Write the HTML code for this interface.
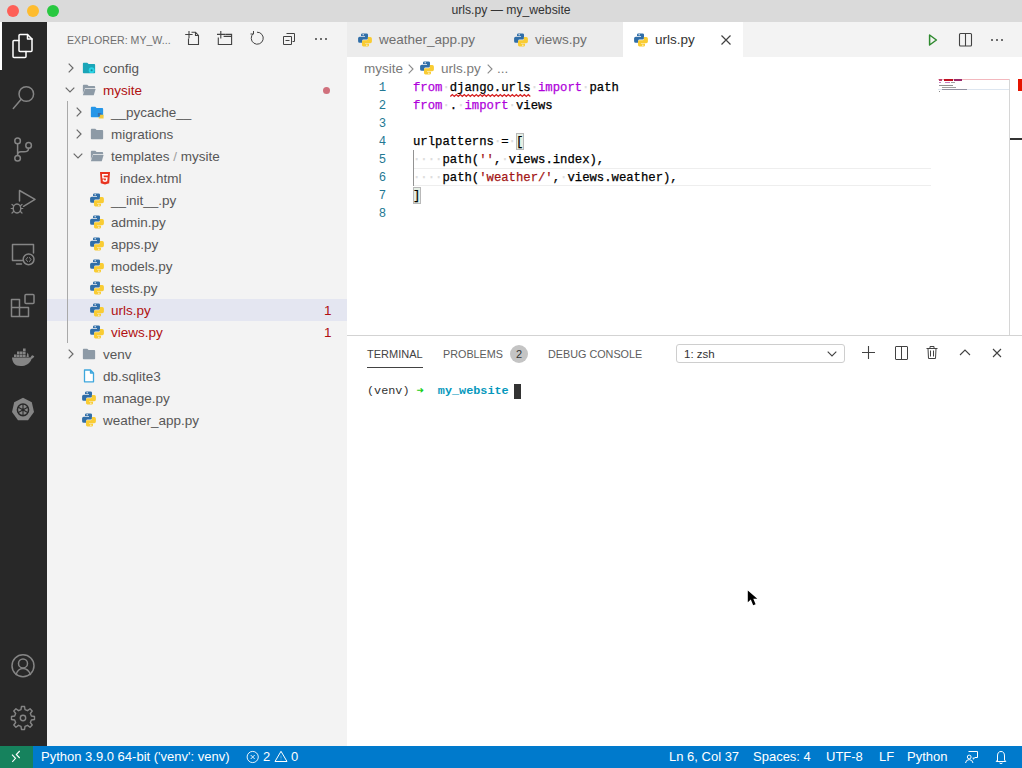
<!DOCTYPE html>
<html><head><meta charset="utf-8">
<style>
*{box-sizing:border-box;margin:0;padding:0}
html,body{width:1022px;height:768px;overflow:hidden;background:#fff;font-family:"Liberation Sans",sans-serif;position:relative}
.a{position:absolute}
svg{position:absolute;overflow:visible}
#title{left:0;top:0;width:1022px;height:22px;background:#dadada;}
.tl{position:absolute;top:5px;width:12px;height:12px;border-radius:50%}
#act{left:0;top:22px;width:47px;height:724px;background:#282828}
#side{left:47px;top:22px;width:300px;height:724px;background:#f3f3f3;color:#616161}
.t{position:absolute;white-space:pre;line-height:1}
.row{font-size:13.5px;color:#575757;margin-top:1px}
.err{color:#b01011}
.code{font-family:"Liberation Mono",monospace;font-size:12.25px;white-space:pre;position:absolute;line-height:18px;color:#000;margin-top:1px;-webkit-text-stroke:0.25px}
.kw{color:#af00db}
.str{color:#a31515}
.ln{font-family:"Liberation Mono",monospace;font-size:12.25px;position:absolute;line-height:18px;color:#237893;width:30px;text-align:right;margin-top:1px}
#status{left:0;top:746px;width:1022px;height:22px;background:#007acc;color:#fff}
.ws{color:#dcdcdc}
.st{font-size:12.6px;color:#fff}
</style></head>
<body>
<svg width="0" height="0" style="position:absolute">
<defs>
<symbol id="py" viewBox="0 0 14.4 14">
<path id="pyb" fill="#306ea8" d="M4.5 0.2H8.8Q10.3 0.2 10.3 1.7V5.2Q10.3 6.6 8.9 6.6H5.7Q4.3 6.6 4.3 8V9.9H1.7Q0.1 9.9 0.1 8.2V5.3Q0.1 3.6 1.8 3.6H7.2V3H3.1V1.6Q3.1 0.2 4.5 0.2Z"/>
<circle cx="5.3" cy="1.6" r="0.65" fill="#fff"/>
<g transform="rotate(180 7.2 6.95)"><path fill="#f9cc33" d="M4.5 0.2H8.8Q10.3 0.2 10.3 1.7V5.2Q10.3 6.6 8.9 6.6H5.7Q4.3 6.6 4.3 8V9.9H1.7Q0.1 9.9 0.1 8.2V5.3Q0.1 3.6 1.8 3.6H7.2V3H3.1V1.6Q3.1 0.2 4.5 0.2Z"/>
<circle cx="5.3" cy="1.6" r="0.65" fill="#fff"/></g>
</symbol>
<symbol id="fold" viewBox="0 0 16 16">
<path fill="#8d9aa6" d="M1 3.2C1 2.5 1.5 2 2.2 2H6L7.5 3.5H13.8C14.5 3.5 15 4 15 4.7V12.8C15 13.5 14.5 14 13.8 14H2.2C1.5 14 1 13.5 1 12.8Z"/>
</symbol>
<symbol id="foldopen" viewBox="0 0 16 16">
<path fill="#8d9aa6" d="M1 3.2C1 2.5 1.5 2 2.2 2H6L7.5 3.5H13.8C14.5 3.5 15 4 15 4.7V6H3.5L1 12Z"/>
<path fill="#8d9aa6" d="M3.3 6.8H15.6L13.4 14H1Z"/>
</symbol>
</defs>
</svg>

<!-- TITLE BAR -->
<div id="title" class="a">
  <div class="tl" style="left:7px;background:#fe5f57"></div>
  <div class="tl" style="left:27px;background:#febc2e"></div>
  <div class="tl" style="left:47px;background:#28c840"></div>
  <div class="t" style="left:0;width:1022px;top:4px;text-align:center;font-size:12.2px;color:#333">urls.py — my_website</div>
</div>

<!-- ACTIVITY BAR -->
<div id="act" class="a">
  <div class="a" style="left:0;top:0;width:2px;height:48px;background:#fff"></div>
</div>
<!-- activity icons -->
<svg style="left:0;top:0" width="47" height="768" fill="none" stroke="#858585" stroke-width="1.5" stroke-linejoin="round" stroke-linecap="round">
 <g stroke="#fff">
  <path d="M20 34.5H27.5L32 39V50.5Q32 51.5 31 51.5H20Q19 51.5 19 50.5V35.5Q19 34.5 20 34.5Z"/>
  <path d="M27.5 34.5V39H32"/>
  <path d="M19 40.5H14Q13 40.5 13 41.5V56.5Q13 57.5 14 57.5H25Q26 57.5 26 56.5V51.5"/>
 </g>
 <circle cx="26.3" cy="94" r="7.3"/>
 <path d="M21.2 99.2L13.3 108.4"/>
 <circle cx="17.6" cy="140.9" r="2.8"/>
 <circle cx="17.6" cy="158.3" r="2.8"/>
 <circle cx="28.6" cy="145.4" r="2.8"/>
 <path d="M17.6 143.7V155.5M28.6 148.2Q28.6 151.8 24 151.8H21Q17.6 151.8 17.6 155"/>
 <path d="M19.5 190.5L35 199.3L23.5 206.3M19.5 190.5V201"/>
 <ellipse cx="17" cy="208.5" rx="3.8" ry="4.4"/>
 <path d="M12 204.5L13.6 205.8M22 204.5L20.4 205.8M11.2 208.5H13.2M22.8 208.5H20.8M12 213L13.6 211.5M22 213L20.4 211.5" stroke-width="1.2"/>
 <path d="M22.5 260.5H12.5V244.5H33.5V253" />
 <path d="M16.5 264H21.5"/>
 <circle cx="28.6" cy="259.3" r="5.4"/>
 <path d="M27.5 257.5L26 259.5L27.5 261.5M29.5 257.5L31 259.5L29.5 261.5" stroke-width="1"/>
 <path d="M11.5 299.5H19.5V307.5H28.5V316.5H11.5ZM11.5 307.5H19.5V316.5"/>
 <rect x="25" y="294.5" width="9" height="9" rx="1"/>
 <circle cx="23" cy="665.8" r="11"/>
 <circle cx="23" cy="663.4" r="4.5"/>
 <path d="M16 674.5Q18 668.5 23 668.5Q28 668.5 30.5 674.5"/>
 <path d="M21.46 706.50 L24.54 706.50 L25.01 709.64 L27.49 710.67 L30.04 708.78 L32.22 710.96 L30.33 713.51 L31.36 715.99 L34.50 716.46 L34.50 719.54 L31.36 720.01 L30.33 722.49 L32.22 725.04 L30.04 727.22 L27.49 725.33 L25.01 726.36 L24.54 729.50 L21.46 729.50 L20.99 726.36 L18.51 725.33 L15.96 727.22 L13.78 725.04 L15.67 722.49 L14.64 720.01 L11.50 719.54 L11.50 716.46 L14.64 715.99 L15.67 713.51 L13.78 710.96 L15.96 708.78 L18.51 710.67 L20.99 709.64Z" stroke-width="1.4"/>
 <circle cx="23" cy="718" r="2.7" stroke-width="1.4"/>
</svg>
<svg style="left:11px;top:346px" width="24" height="24" viewBox="0 0 24 24">
  <path fill="#858585" d="M1 11.5H19.5C20 10.3 20.6 9.6 21.5 9.3L23.3 10.3C22.7 11.6 21.6 12.6 20.5 12.9 19 17.5 15 20 9.5 20 4 20 1.3 16.5 1 11.5Z"/>
  <path fill="#858585" d="M3 8.5H5.6V11H3ZM6 8.5H8.6V11H6ZM9 8.5H11.6V11H9ZM12 8.5H14.6V11H12ZM6 5.5H8.6V8.1H6ZM9 5.5H11.6V8.1H9ZM12 5.5H14.6V8.1H12ZM12 2.5H14.6V5.1H12ZM16.5 6.5Q17.8 7.5 17.8 11H15.5Z"/>
</svg>
<svg style="left:11px;top:397px" width="24" height="25" viewBox="0 0 24 24" preserveAspectRatio="none">
  <path fill="#858585" d="M12 0.8L20.8 5L23 14.5L17 22.2H7L1 14.5L3.2 5Z"/>
  <circle cx="12" cy="12.3" r="5.6" fill="none" stroke="#282828" stroke-width="1.5"/>
  <path d="M12 6.7V17.9M6.9 9.5L17.1 15.1M6.9 15.1L17.1 9.5" stroke="#282828" stroke-width="1.1"/>
  <circle cx="12" cy="12.3" r="1.3" fill="#282828"/>
</svg>
<!-- SIDEBAR -->
<div id="side" class="a"></div>
<div class="t" style="left:67px;top:35px;font-size:10.6px;color:#6f6f6f">EXPLORER: MY_W...</div>

<!-- SIDEBAR ROWS -->
<div class="a" style="left:47px;top:299px;width:300px;height:22px;background:#e4e6f1"></div>
<div class="a" style="left:67px;top:101px;width:1px;height:242px;background:#a9a9a9"></div>
<svg style="left:68px;top:63px" width="6" height="10" viewBox="0 0 6 10"><path d="M0.7 0.7L5 5L0.7 9.3" fill="none" stroke="#6a6a6a" stroke-width="1.2"/></svg>
<svg style="left:82px;top:61px" width="14" height="14" viewBox="0 0 16 16"><path fill="#1aa5b8" d="M1 3.2C1 2.5 1.5 2 2.2 2H6L7.5 3.5H13.8C14.5 3.5 15 4 15 4.7V12.8C15 13.5 14.5 14 13.8 14H2.2C1.5 14 1 13.5 1 12.8Z"/><circle cx="11" cy="10.5" r="3.3" fill="#2ad4e6"/><circle cx="11" cy="10.5" r="1.2" fill="#1a8a99"/></svg>
<div class="t row" style="left:103px;top:57px;line-height:22px">config</div>
<svg style="left:65px;top:87px" width="10" height="6" viewBox="0 0 10 6"><path d="M0.7 0.7L5 5L9.3 0.7" fill="none" stroke="#6a6a6a" stroke-width="1.2"/></svg>
<svg style="left:82px;top:83px" width="14" height="14"><use href="#foldopen"/></svg>
<div class="t row err" style="left:103px;top:79px;line-height:22px">mysite</div>
<svg style="left:76px;top:107px" width="6" height="10" viewBox="0 0 6 10"><path d="M0.7 0.7L5 5L0.7 9.3" fill="none" stroke="#6a6a6a" stroke-width="1.2"/></svg>
<svg style="left:90px;top:105px" width="14" height="14" viewBox="0 0 16 16"><path fill="#2596e8" d="M1 3.2C1 2.5 1.5 2 2.2 2H6L7.5 3.5H13.8C14.5 3.5 15 4 15 4.7V12.8C15 13.5 14.5 14 13.8 14H2.2C1.5 14 1 13.5 1 12.8Z"/><path fill="#3a6fa8" d="M9 9H13V11H11V13H9Z"/><path fill="#f3c93b" d="M11.5 11H15.5V15.5H10V13.5H11.5Z"/></svg>
<div class="t row" style="left:111px;top:101px;line-height:22px">__pycache__</div>
<svg style="left:76px;top:129px" width="6" height="10" viewBox="0 0 6 10"><path d="M0.7 0.7L5 5L0.7 9.3" fill="none" stroke="#6a6a6a" stroke-width="1.2"/></svg>
<svg style="left:90px;top:127px" width="14" height="14"><use href="#fold"/></svg>
<div class="t row" style="left:111px;top:123px;line-height:22px">migrations</div>
<svg style="left:73px;top:153px" width="10" height="6" viewBox="0 0 10 6"><path d="M0.7 0.7L5 5L9.3 0.7" fill="none" stroke="#6a6a6a" stroke-width="1.2"/></svg>
<svg style="left:90px;top:149px" width="14" height="14"><use href="#foldopen"/></svg>
<div class="t row" style="left:111px;top:145px;line-height:22px">templates <span style="color:#a0a0a0">/</span> mysite</div>
<svg style="left:98px;top:171px" width="14" height="14" viewBox="0 0 14 14"><path fill="#e8341f" d="M2 1H12L11.2 12.2L7 13.6L2.8 12.2Z"/><path fill="#fff" d="M4 3H10L9.8 4.5H5.6L5.75 6.2H9.65L9.2 10.3L7 11L4.8 10.3L4.65 8.5H6.1L6.2 9.3L7 9.6L7.8 9.3L7.95 7.6H4.3Z"/></svg>
<div class="t row" style="left:120px;top:167px;line-height:22px">index.html</div>
<svg style="left:90px;top:193px" width="14" height="14"><use href="#py"/></svg>
<div class="t row" style="left:111px;top:189px;line-height:22px">__init__.py</div>
<svg style="left:90px;top:215px" width="14" height="14"><use href="#py"/></svg>
<div class="t row" style="left:111px;top:211px;line-height:22px">admin.py</div>
<svg style="left:90px;top:237px" width="14" height="14"><use href="#py"/></svg>
<div class="t row" style="left:111px;top:233px;line-height:22px">apps.py</div>
<svg style="left:90px;top:259px" width="14" height="14"><use href="#py"/></svg>
<div class="t row" style="left:111px;top:255px;line-height:22px">models.py</div>
<svg style="left:90px;top:281px" width="14" height="14"><use href="#py"/></svg>
<div class="t row" style="left:111px;top:277px;line-height:22px">tests.py</div>
<svg style="left:90px;top:303px" width="14" height="14"><use href="#py"/></svg>
<div class="t row err" style="left:111px;top:299px;line-height:22px">urls.py</div>
<svg style="left:90px;top:325px" width="14" height="14"><use href="#py"/></svg>
<div class="t row err" style="left:111px;top:321px;line-height:22px">views.py</div>
<svg style="left:68px;top:349px" width="6" height="10" viewBox="0 0 6 10"><path d="M0.7 0.7L5 5L0.7 9.3" fill="none" stroke="#6a6a6a" stroke-width="1.2"/></svg>
<svg style="left:82px;top:347px" width="14" height="14"><use href="#fold"/></svg>
<div class="t row" style="left:103px;top:343px;line-height:22px">venv</div>
<svg style="left:82px;top:369px" width="14" height="14" viewBox="0 0 14 14"><path d="M2.5 1H8.5L11.5 4V12.8H2.5Z M8.5 1V4H11.5" fill="#fff" stroke="#3ea7dd" stroke-width="1.3" stroke-linejoin="round"/></svg>
<div class="t row" style="left:103px;top:365px;line-height:22px">db.sqlite3</div>
<svg style="left:82px;top:391px" width="14" height="14"><use href="#py"/></svg>
<div class="t row" style="left:103px;top:387px;line-height:22px">manage.py</div>
<svg style="left:82px;top:413px" width="14" height="14"><use href="#py"/></svg>
<div class="t row" style="left:103px;top:409px;line-height:22px">weather_app.py</div>
<div class="a" style="left:323px;top:87px;width:7px;height:7px;border-radius:50%;background:#d0707c"></div>
<div class="t row err" style="left:324px;top:299px;line-height:22px">1</div>
<div class="t row err" style="left:324px;top:321px;line-height:22px">1</div>
<svg style="left:184px;top:31px" width="16" height="16" viewBox="0 0 16 16" fill="none" stroke="#424242" stroke-width="1.1"><path d="M4.5 7.5V13.5H14.5V4.5L11.5 1.2H7.5M11.5 1.2V4.5H14.5M1.2 3.5H8.6M5 0V7.2"/></svg>
<svg style="left:217px;top:31px" width="16" height="16" viewBox="0 0 16 16" fill="none" stroke="#424242" stroke-width="1.1"><path d="M1.3 6.5V13.5H14.6V3.4H8.2M6.6 5.4H14.6M0 3.4H8M3.8 0V7.6"/></svg>
<svg style="left:249px;top:30px" width="16" height="16" viewBox="0 0 16 16" fill="none" stroke="#424242" stroke-width="1"><path d="M4.5 3.5A6 6 0 1 0 8 2.2"/><path d="M4.5 1V4H1.5" stroke-width="1"/></svg>
<svg style="left:281px;top:31px" width="16" height="16" viewBox="0 0 16 16" fill="none" stroke="#424242" stroke-width="1"><path d="M5.5 2.5H13.5V10.5H11.5M2.5 5.5H10.5V13.5H2.5ZM4.5 9.5H8.5"/></svg>
<svg style="left:313px;top:31px" width="16" height="16" viewBox="0 0 16 16" fill="#424242"><circle cx="3" cy="8" r="1"/><circle cx="8" cy="8" r="1"/><circle cx="13" cy="8" r="1"/></svg>
<!-- EDITOR -->
<div class="a" style="left:347px;top:22px;width:675px;height:35px;background:#f3f3f3"></div>
<div class="a" style="left:347px;top:22px;width:276px;height:35px;background:#ececec"></div>
<div class="a" style="left:623px;top:22px;width:120px;height:35px;background:#fff"></div>
<svg style="left:358px;top:33px" width="14" height="14"><use href="#py"/></svg>
<div class="t" style="left:379px;top:22px;line-height:35px;font-size:13.5px;color:#6f6f6f">weather_app.py</div>
<svg style="left:514px;top:33px" width="14" height="14"><use href="#py"/></svg>
<div class="t" style="left:535px;top:22px;line-height:35px;font-size:13.5px;color:#6f6f6f">views.py</div>
<svg style="left:634px;top:33px" width="14" height="14"><use href="#py"/></svg>
<div class="t" style="left:655px;top:22px;line-height:35px;font-size:13.5px;color:#333333">urls.py</div>
<svg style="left:720px;top:34px" width="12" height="12" viewBox="0 0 12 12"><path d="M1.5 1.5L10.5 10.5M10.5 1.5L1.5 10.5" stroke="#424242" stroke-width="1.2"/></svg>
<svg style="left:925px;top:32px" width="16" height="16" viewBox="0 0 16 16"><path d="M4.6 3L11.4 8L4.6 13Z" fill="none" stroke="#2f8a2f" stroke-width="1.5" stroke-linejoin="round"/></svg>
<svg style="left:957px;top:32px" width="16" height="16" viewBox="0 0 16 16" fill="none" stroke="#424242" stroke-width="1.1"><rect x="2.5" y="1.5" width="12" height="12.5" rx="1"/><path d="M8.5 1.5V14"/></svg>
<svg style="left:989px;top:32px" width="16" height="16" viewBox="0 0 16 16" fill="#424242"><circle cx="3" cy="8" r="1"/><circle cx="8" cy="8" r="1"/><circle cx="13" cy="8" r="1"/></svg>
<div class="t" style="left:364px;top:58px;line-height:22px;font-size:13.5px;color:#7a7a7a">mysite</div>
<svg style="left:408px;top:64px" width="6" height="10" viewBox="0 0 6 10"><path d="M0.7 0.7L5 5L0.7 9.3" fill="none" stroke="#8a8a8a" stroke-width="1.1"/></svg>
<svg style="left:420px;top:61px" width="14" height="14"><use href="#py"/></svg>
<div class="t" style="left:441px;top:58px;line-height:22px;font-size:13.5px;color:#7a7a7a">urls.py</div>
<svg style="left:487px;top:64px" width="6" height="10" viewBox="0 0 6 10"><path d="M0.7 0.7L5 5L0.7 9.3" fill="none" stroke="#8a8a8a" stroke-width="1.1"/></svg>
<div class="t" style="left:497px;top:58px;line-height:22px;font-size:13.5px;color:#7a7a7a">...</div>
<div class="a" style="left:413px;top:168px;width:518px;height:18px;border-top:1px solid #eeeeee;border-bottom:1px solid #eeeeee"></div>
<div class="a" style="left:515.6px;top:133px;width:8px;height:17px;border:1px solid #b9b9b9;background:rgba(0,100,0,.1)"></div>
<div class="a" style="left:413px;top:187px;width:8px;height:17px;border:1px solid #b9b9b9;background:rgba(0,100,0,.1)"></div>
<div class="a" style="left:413px;top:150px;width:1px;height:36px;background:#939393"></div>
<div class="ln" style="left:356px;top:78px">1</div>
<div class="ln" style="left:356px;top:96px">2</div>
<div class="ln" style="left:356px;top:114px">3</div>
<div class="ln" style="left:356px;top:132px">4</div>
<div class="ln" style="left:356px;top:150px">5</div>
<div class="ln" style="left:356px;top:168px">6</div>
<div class="ln" style="left:356px;top:186px">7</div>
<div class="ln" style="left:356px;top:204px">8</div>
<div class="code" style="left:413px;top:78px"><span class="kw">from</span><span class="ws">·</span><span class="sq">django.urls</span><span class="ws">·</span><span class="kw">import</span><span class="ws">·</span>path</div>
<div class="code" style="left:413px;top:96px"><span class="kw">from</span><span class="ws">·</span>.<span class="ws">·</span><span class="kw">import</span><span class="ws">·</span>views</div>
<div class="code" style="left:413px;top:132px">urlpatterns<span class="ws">·</span>=<span class="ws">·</span>[</div>
<div class="code" style="left:413px;top:150px"><span class="ws">·</span><span class="ws">·</span><span class="ws">·</span><span class="ws">·</span>path(<span class="str">''</span>,<span class="ws">·</span>views.index),</div>
<div class="code" style="left:413px;top:168px"><span class="ws">·</span><span class="ws">·</span><span class="ws">·</span><span class="ws">·</span>path(<span class="str">'weather/'</span>,<span class="ws">·</span>views.weather),</div>
<div class="code" style="left:413px;top:186px">]</div>
<svg style="left:0;top:0" width="1022" height="768"><path d="M450.3 96.5 L452.3 94.5 L454.3 96.5 L456.3 94.5 L458.3 96.5 L460.3 94.5 L462.3 96.5 L464.3 94.5 L466.3 96.5 L468.3 94.5 L470.3 96.5 L472.3 94.5 L474.3 96.5 L476.3 94.5 L478.3 96.5 L480.3 94.5 L482.3 96.5 L484.3 94.5 L486.3 96.5 L488.3 94.5 L490.3 96.5 L492.3 94.5 L494.3 96.5 L496.3 94.5 L498.3 96.5 L500.3 94.5 L502.3 96.5 L504.3 94.5 L506.3 96.5 L508.3 94.5 L510.3 96.5 L512.3 94.5 L514.3 96.5 L516.3 94.5 L518.3 96.5 L520.3 94.5 L522.3 96.5 L524.3 94.5 L526.3 96.5 L528.3 94.5 L530.3 96.5" fill="none" stroke="#d41a1a" stroke-width="1.2" /></svg>
<div class="a" style="left:1009px;top:79px;width:1px;height:256px;background:#d6d6d6"></div>
<div class="a" style="left:1018px;top:79px;width:4px;height:12px;background:#e51400"></div>
<div class="a" style="left:1010px;top:138px;width:12px;height:2px;background:#333"></div>
<div class="a" style="left:938px;top:79px;width:71px;height:1px;background:#f3b8be"></div>
<div class="a" style="left:939px;top:79px;width:3px;height:2px;background:#c04070"></div>
<div class="a" style="left:944px;top:79px;width:9px;height:2px;background:#c01020"></div>
<div class="a" style="left:954px;top:79px;width:8px;height:2px;background:#9a2a6a"></div>
<div class="a" style="left:939px;top:82px;width:2px;height:1px;background:#c080c0"></div>
<div class="a" style="left:945px;top:82px;width:5px;height:1px;background:#c080c0"></div>
<div class="a" style="left:951px;top:82px;width:4px;height:1px;background:#a0a0a0"></div>
<div class="a" style="left:939px;top:85px;width:14px;height:1px;background:#909090"></div>
<div class="a" style="left:942px;top:87px;width:14px;height:1px;background:#a0a0a0"></div>
<div class="a" style="left:938px;top:89px;width:71px;height:1px;background:#dde6f0"></div>
<div class="a" style="left:942px;top:89px;width:25px;height:1px;background:#9090a0"></div>
<div class="a" style="left:939px;top:91px;width:1px;height:1px;background:#888"></div>
<!-- PANEL + STATUS -->
<div class="a" style="left:347px;top:335px;width:675px;height:1px;background:#d3d3d3"></div>
<div class="t" style="left:367px;top:349px;font-size:11px;color:#424242">TERMINAL</div>
<div class="a" style="left:367px;top:367px;width:56px;height:1px;background:#424242"></div>
<div class="t" style="left:443px;top:349px;font-size:10.8px;color:#5c5c5c">PROBLEMS</div>
<div class="a" style="left:510px;top:345px;width:18px;height:18px;border-radius:9px;background:#c4c4c4"></div>
<div class="t" style="left:510px;top:349px;width:18px;text-align:center;font-size:11px;color:#333">2</div>
<div class="t" style="left:548px;top:349px;font-size:10.8px;color:#5c5c5c">DEBUG CONSOLE</div>
<div class="a" style="left:676px;top:344px;width:169px;height:19px;border:1px solid #cecece;border-radius:3px;background:#fff"></div>
<div class="t" style="left:684px;top:349px;font-size:11.5px;color:#333">1: zsh</div>
<svg style="left:827px;top:351px" width="10" height="6" viewBox="0 0 10 6"><path d="M0.7 0.7L5 5L9.3 0.7" fill="none" stroke="#424242" stroke-width="1.1"/></svg>
<svg style="left:860px;top:345px" width="16" height="16" viewBox="0 0 16 16" fill="none" stroke="#424242" stroke-width="1.1"><path d="M8.5 1V14M2 7.5H15"/></svg>
<svg style="left:893px;top:345px" width="16" height="16" viewBox="0 0 16 16" fill="none" stroke="#424242" stroke-width="1"><rect x="2.5" y="1.5" width="12" height="13" rx="0.5"/><path d="M8.5 1.5V14.5"/></svg>
<svg style="left:924px;top:345px" width="16" height="16" viewBox="0 0 16 16" fill="none" stroke="#424242" stroke-width="1"><path d="M2.5 3.5H13.5M6 3.5V1.5H10V3.5M4 3.5L4.5 13.5H11.5L12 3.5M6.5 5.5V11.5M9.5 5.5V11.5"/></svg>
<svg style="left:957px;top:345px" width="16" height="16" viewBox="0 0 16 16" fill="none" stroke="#424242" stroke-width="1.1"><path d="M3 10L8 5L13 10"/></svg>
<svg style="left:989px;top:345px" width="16" height="16" viewBox="0 0 16 16" fill="none" stroke="#424242" stroke-width="1.1"><path d="M4 4L12 12M12 4L4 12"/></svg>
<div class="code" style="left:367px;top:381px;font-size:11.8px;color:#333;-webkit-text-stroke:0">(venv) <b style="color:#14ce14">➜</b>  <b style="color:#0598bc">my_website</b> </div>
<div class="a" style="left:514px;top:384px;width:7px;height:15px;background:#333"></div>
<div id="status" class="a"></div>
<div class="a" style="left:0;top:746px;width:33px;height:22px;background:#16825d"></div>
<svg style="left:10px;top:750px" width="14" height="14" viewBox="0 0 14 14" fill="none" stroke="#fff" stroke-width="1.1"><path d="M2 4.7L5.5 8.3L2.3 11.8M9.7 1L6.3 4.5L9.7 8"/></svg>
<div class="t" style="left:41px;font-size:13px;color:#fff;line-height:22px;top:746px">Python 3.9.0 64-bit ('venv': venv)</div>
<svg style="left:246px;top:750px" width="14" height="14" viewBox="0 0 14 14" fill="none" stroke="#fff" stroke-width="0.9"><circle cx="6.7" cy="7" r="5.6"/><path d="M4.7 5L8.7 9M8.7 5L4.7 9"/></svg>
<div class="t" style="left:263px;font-size:13px;color:#fff;line-height:22px;top:746px">2</div>
<svg style="left:274px;top:749px" width="16" height="16" viewBox="0 0 16 16" fill="none" stroke="#fff" stroke-width="1"><path d="M7 2.3L13 12.5H1Z"/><path d="M7 6.5V9.5M7 10.5V11.3" stroke-width="0.6" opacity="0.6"/></svg>
<div class="t" style="left:291px;font-size:13px;color:#fff;line-height:22px;top:746px">0</div>
<div class="t" style="left:669px;font-size:13px;color:#fff;line-height:22px;top:746px">Ln 6, Col 37</div>
<div class="t" style="left:753px;font-size:13px;color:#fff;line-height:22px;top:746px">Spaces: 4</div>
<div class="t" style="left:826px;font-size:13px;color:#fff;line-height:22px;top:746px">UTF-8</div>
<div class="t" style="left:879px;font-size:13px;color:#fff;line-height:22px;top:746px">LF</div>
<div class="t" style="left:907px;font-size:13px;color:#fff;line-height:22px;top:746px">Python</div>
<svg style="left:0;top:0" width="1022" height="768" fill="none" stroke="#fff" stroke-width="1">
<path d="M968.5 751.5H977.5V757.5H975L973.2 759.2V757.5"/>
<circle cx="969.2" cy="757" r="1.9"/>
<path d="M965.5 763Q966 759.6 969.2 759.6Q972.4 759.6 973 763"/>
<path d="M997.5 761.5V756Q997.5 751.5 1001 751.5Q1004.5 751.5 1004.5 756V760L1005.8 761.5H996.2L997.5 760M999.5 763Q1001 764.2 1002.5 763"/>
</svg>
<!-- MOUSE -->
<svg style="left:0;top:0" width="1022" height="768"><path d="M747.8 590.5L747.8 602.3L750.8 599.5L753.2 605.3L755.6 604.3L753.3 598.8H757.3Z" fill="#000" stroke="#fff" stroke-width="1.6" stroke-linejoin="round" style="paint-order:stroke"/></svg>
</body></html>
